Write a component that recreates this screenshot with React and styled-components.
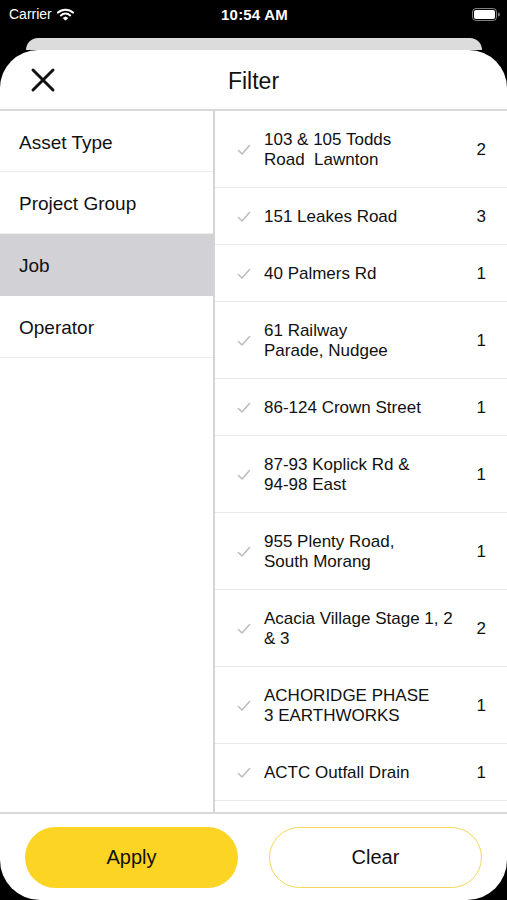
import React from "react";
import styled, { createGlobalStyle } from "styled-components";

const Global = createGlobalStyle`
  html, body {
    margin: 0;
    padding: 0;
    background: #000;
  }
  body {
    font-family: "Liberation Sans", Arial, sans-serif;
    -webkit-font-smoothing: antialiased;
  }
`;

const Screen = styled.div`
  width: 507px;
  height: 900px;
  display: flex;
  flex-direction: column;
  background: #000;
  overflow: hidden;
`;

const StatusBar = styled.div`
  height: 28px;
  margin-bottom: 10px;
  display: grid;
  grid-template-columns: 1fr auto 1fr;
  align-items: center;
  padding: 0 7px 0 9px;
  color: #fff;
  font-size: 14px;

  .left {
    display: flex;
    align-items: center;
    gap: 5px;
  }
  .time {
    font-size: 15px;
    font-weight: 700;
    letter-spacing: 0.2px;
  }
  .right {
    display: flex;
    justify-content: flex-end;
  }
`;

const Peek = styled.div`
  height: 12px;
  margin: 0 25px 0 26px;
  background: #dcdcdc;
  border-radius: 12px 12px 0 0;
`;

const Sheet = styled.div`
  flex: 1;
  background: #fff;
  border-radius: 38px 38px 40px 40px;
  display: flex;
  flex-direction: column;
  overflow: hidden;
`;

const Header = styled.header`
  height: 61px;
  flex-shrink: 0;
  position: relative;
  display: flex;
  align-items: center;
  justify-content: center;
  padding-top: 3px;
  box-sizing: border-box;
  border-bottom: 2px solid #d9d9d9;

  h1 {
    margin: 0;
    font-size: 23px;
    font-weight: 400;
    color: #111;
  }
`;

const CloseButton = styled.button`
  position: absolute;
  left: 30px;
  top: 17px;
  width: 26px;
  height: 26px;
  padding: 0;
  border: none;
  background: none;
  display: flex;
`;

const Body = styled.div`
  flex: 1;
  min-height: 0;
  display: grid;
  grid-template-columns: 215px 1fr;
`;

const Categories = styled.ul`
  list-style: none;
  margin: 0;
  padding: 0;
  border-right: 2px solid #d4d4d4;
`;

const Category = styled.li`
  height: 61px;
  box-sizing: border-box;
  display: flex;
  align-items: center;
  padding: 3px 0 0 19px;
  font-size: 19px;
  color: #111;
  background: ${(p) => (p.$active ? "#d1d1d6" : "#fff")};
  border-bottom: 1px solid ${(p) => (p.$active ? "#d1d1d6" : "#ececec")};
  & + & {
    height: 62px;
  }
`;

const Options = styled.ul`
  list-style: none;
  margin: 0;
  padding: 0;
  overflow: hidden;
`;

const Option = styled.li`
  display: flex;
  align-items: center;
  padding: 19px 21px 17px 22px;
  border-bottom: 1px solid #e8e8e8;
  font-size: 17px;
  line-height: 20px;
  color: #111;

  .label {
    flex: 1;
    white-space: pre-wrap;
    margin-left: 13px;
  }
  .count {
    margin-left: 12px;
  }
`;

const Footer = styled.footer`
  flex-shrink: 0;
  height: 88px;
  border-top: 2px solid #d9d9d9;
  display: grid;
  grid-template-columns: 1fr 1fr;
  column-gap: 31px;
  padding: 13px 25px 0 25px;
  box-sizing: border-box;
`;

const Button = styled.button`
  height: 61px;
  border-radius: 31px;
  font-family: inherit;
  font-size: 20px;
  font-weight: 500;
  color: #111;
  background: ${(p) => (p.$primary ? "#fcd423" : "#fff")};
  border: ${(p) => (p.$primary ? "none" : "1.5px solid #f3d65a")};
`;

const categories = ["Asset Type", "Project Group", "Job", "Operator"];

const jobs = [
  ["103 & 105 Todds\nRoad  Lawnton", 2],
  ["151 Leakes Road", 3],
  ["40 Palmers Rd", 1],
  ["61 Railway\nParade, Nudgee", 1],
  ["86-124 Crown Street", 1],
  ["87-93 Koplick Rd &\n94-98 East", 1],
  ["955 Plenty Road,\nSouth Morang", 1],
  ["Acacia Village Stage 1, 2\n& 3", 2],
  ["ACHORIDGE PHASE\n3 EARTHWORKS", 1],
  ["ACTC Outfall Drain", 1],
];

const Check = () => (
  <svg width="14" height="12" viewBox="0 0 14 12">
    <path d="M1.5 6.5 L5 10 L12.5 1.5" fill="none" stroke="#bdbdbd" strokeWidth="1.6" strokeLinecap="round" strokeLinejoin="round" />
  </svg>
);

const Wifi = () => (
  <svg width="17" height="13" viewBox="0 0 17 13">
    <path d="M1 4.6 A11 11 0 0 1 16 4.6" fill="none" stroke="#fff" strokeWidth="2" strokeLinecap="round" />
    <path d="M3.8 7.4 A7 7 0 0 1 13.2 7.4" fill="none" stroke="#fff" strokeWidth="2" strokeLinecap="round" />
    <path d="M6.4 10 A3 3 0 0 1 10.6 10 L8.5 12.2 Z" fill="#fff" stroke="#fff" strokeWidth="1" strokeLinejoin="round" />
  </svg>
);

const Battery = () => (
  <svg width="28" height="13" viewBox="0 0 28 13">
    <rect x="0.5" y="0.5" width="24" height="12" rx="3.5" fill="none" stroke="#fff" strokeOpacity="0.5" />
    <rect x="2" y="2" width="21" height="9" rx="2" fill="#fff" />
    <path d="M26 4.5 a1.5 1.5 0 0 1 0 4 z" fill="#fff" fillOpacity="0.5" />
  </svg>
);

export default function App() {
  return (
    <>
      <Global />
      <Screen>
        <StatusBar>
          <div className="left">
            Carrier <Wifi />
          </div>
          <div className="time">10:54 AM</div>
          <div className="right">
            <Battery />
          </div>
        </StatusBar>
        <Peek />
        <Sheet>
          <Header>
            <CloseButton aria-label="Close">
              <svg width="26" height="26" viewBox="0 0 26 26">
                <path d="M3 3 L23 23 M23 3 L3 23" stroke="#111" strokeWidth="3" strokeLinecap="round" />
              </svg>
            </CloseButton>
            <h1>Filter</h1>
          </Header>
          <Body>
            <Categories>
              {categories.map((c) => (
                <Category key={c} $active={c === "Job"}>
                  {c}
                </Category>
              ))}
            </Categories>
            <Options>
              {jobs.map(([name, count]) => (
                <Option key={name}>
                  <Check />
                  <span className="label">{name}</span>
                  <span className="count">{count}</span>
                </Option>
              ))}
            </Options>
          </Body>
          <Footer>
            <Button $primary>Apply</Button>
            <Button>Clear</Button>
          </Footer>
        </Sheet>
      </Screen>
    </>
  );
}
